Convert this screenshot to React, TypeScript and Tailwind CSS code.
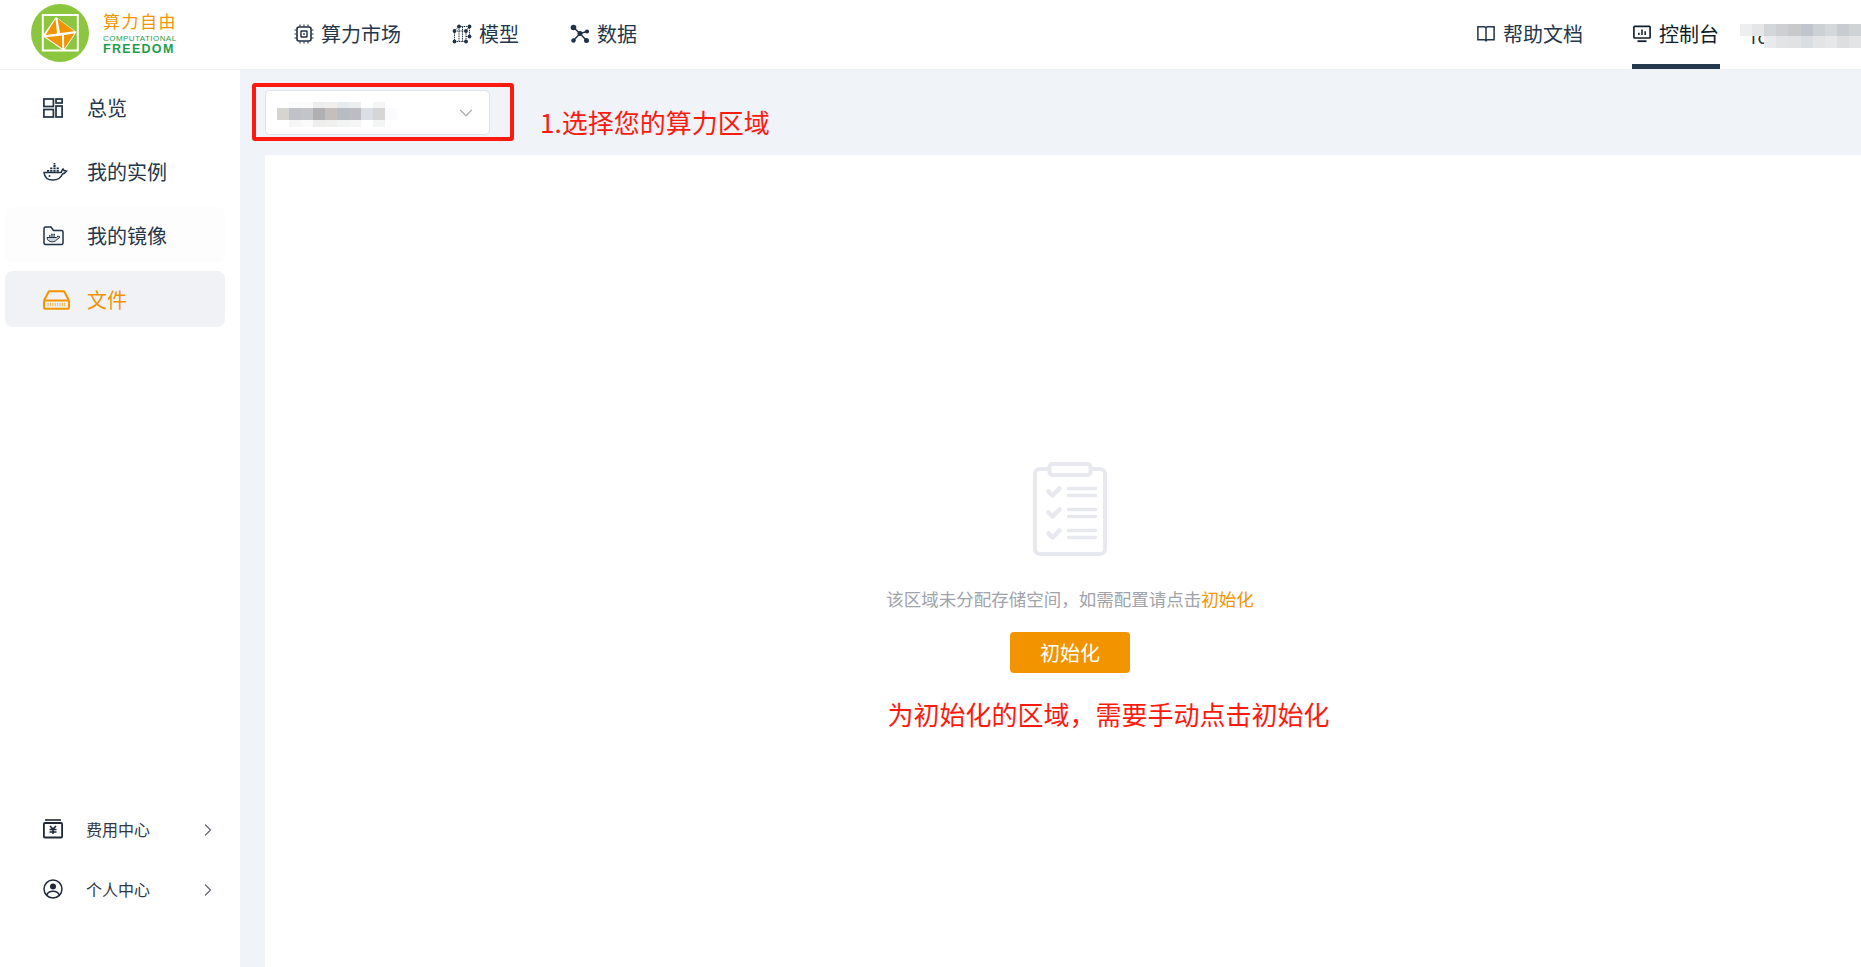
import type { ReactNode } from "react";
import { ChevronDown, ChevronRight } from "lucide-react";

const FONT = "font-['Noto_Sans_CJK_SC','Liberation_Sans',sans-serif]";

function ChipIcon() {
  return (
    <svg viewBox="0 0 20 20" className="-mx-[0.5px] size-5 text-[#1f3144]" fill="none" stroke="currentColor">
      <rect x="3" y="3" width="14" height="14" rx="2" strokeWidth="1.600" />
      <rect x="7" y="7" width="6" height="6" rx="0.6" strokeWidth="1.400" />
      <rect x="9.200" y="9.200" width="1.600" height="1.600" fill="currentColor" stroke="none" />
      <path d="M6 0.5v2M10 0.5v2M14 0.5v2M6 17.5v2M10 17.5v2M14 17.5v2M0.5 6h2M0.5 10h2M0.5 14h2M17.5 6h2M17.5 10h2M17.5 14h2" strokeWidth="1.100" />
    </svg>
  );
}

function ModelIcon() {
  return (
    <svg viewBox="0 0 20 20" className="-mx-[0.5px] size-5 text-[#1f3144]" fill="none" stroke="currentColor">
      <path d="M7 2.5h10.500v10H14M2.500 7h11.500v10.500H2.500zM7 2.500V7M2.500 7L7 2.500M14 7l3.500-4.500M7 7v10.500M10.500 2.500v15" strokeWidth="1" strokeDasharray="1.500 0.800" />
      {[[7, 2.5], [17.5, 2.5], [2.5, 7], [14, 7], [2.5, 17.5], [14, 17.5], [17.5, 12.5]].map(([cx, cy]) => (
        <circle key={`${cx}-${cy}`} cx={cx} cy={cy} r="1.900" fill="currentColor" stroke="none" />
      ))}
    </svg>
  );
}

function DataIcon() {
  return (
    <svg viewBox="0 0 20 20" className="-mx-[0.5px] size-5 text-[#1f3144]" fill="currentColor" stroke="currentColor">
      <path d="M3.500 3.500L10 9.500l7-2M3.500 16.500L10 9.500l6.500 7" strokeWidth="1.500" fill="none" />
      <circle cx="3.500" cy="3.500" r="2.800" stroke="none" />
      <circle cx="17" cy="7.500" r="2.100" stroke="none" />
      <circle cx="10" cy="9.500" r="2.500" stroke="none" />
      <circle cx="3.500" cy="16.500" r="2.200" stroke="none" />
      <circle cx="16.500" cy="16.500" r="2.500" stroke="none" />
    </svg>
  );
}

function BookIcon() {
  return (
    <svg viewBox="0 0 20 20" className="size-[18px] text-[#24364a]" fill="none" stroke="currentColor" strokeWidth="1.700">
      <path d="M1 2h7a2 2 0 0 1 2 2v14a2 2 0 0 0-2-1.500H1zM19 2h-7a2 2 0 0 0-2 2v14a2 2 0 0 1 2-1.500h7z" />
    </svg>
  );
}

function ConsoleIcon() {
  return (
    <svg viewBox="0 0 20 20" className="size-[18px] text-[#0f1c2b]" fill="none" stroke="currentColor">
      <rect x="1" y="1.500" width="18" height="13" rx="1" strokeWidth="1.800" />
      <path d="M6.500 11V8.500M10 11V5M13.500 11V7" strokeWidth="1.700" />
      <path d="M5 18h10" strokeWidth="2" />
    </svg>
  );
}

function GridIcon() {
  return (
    <svg viewBox="0 0 20 20" className="size-5 text-[#1f3144]" fill="none" stroke="currentColor" strokeWidth="1.700">
      <rect x="0.900" y="1" width="9.500" height="7.500" />
      <rect x="0.900" y="11.500" width="9.500" height="7.500" />
      <rect x="13" y="1" width="6.100" height="4" />
      <rect x="13" y="8" width="6.100" height="11" />
    </svg>
  );
}

function WhaleIcon() {
  return (
    <svg viewBox="0 0 25 20" className="h-5 w-[25px] text-[#1f3144]" fill="none" stroke="currentColor" strokeWidth="1.500">
      <path d="M1 10.500h16.500c1 0 1.500-1.500 1.700-2.500l0.800-1 1 1.500 2.500 0.500c-1 1.500-2.500 2.500-4 3-1.500 3.500-5 6-9.500 6-5 0-8.500-2.500-9-7.500z" />
      <circle cx="6.500" cy="14" r="1" fill="currentColor" stroke="none" />
      <path d="M4 8.800h2.200M7.200 8.800h2.200M10.400 8.800h2.200M13.600 8.800h2.200M7.200 6.400h2.200M10.400 6.400h2.200M13.600 6.400h2.200M10.400 4h2.200M11.500 1v1.500" strokeWidth="1.800" />
    </svg>
  );
}

function FolderWhaleIcon() {
  return (
    <svg viewBox="0 0 21 20" className="h-5 w-[21px] text-[#1f3144]" fill="none" stroke="currentColor">
      <path d="M1 2.500a1.500 1.500 0 0 1 1.500-1.500h5.500l2.500 3.500h8a1.500 1.500 0 0 1 1.500 1.500v11a1.500 1.500 0 0 1-1.500 1.500h-16a1.500 1.500 0 0 1-1.500-1.500z" strokeWidth="1.500" />
      <path d="M4 11.500h9.500c0.700 0 1-1 1.200-1.500l2.300 1c-0.500 1-1.500 1.600-2.500 1.800-1 2-3 3-5.200 3-3 0-5.300-1.500-5.300-4.300z" strokeWidth="1" fill="#cbd3dc" />
      <path d="M6 10h1.500M8.200 10h1.500M10.400 10h1.500M8.200 8.300h1.500M10.400 8.300h1.500" strokeWidth="1.300" />
    </svg>
  );
}

function DriveIcon() {
  return (
    <svg viewBox="0 0 27 20" className="h-5 w-[27px] text-[#f29400]" fill="none" stroke="currentColor">
      <path d="M1 10.500L5.500 2a1.500 1.500 0 0 1 1.300-0.800h13.400a1.500 1.500 0 0 1 1.300 0.800L26 10.500" strokeWidth="2" />
      <rect x="1" y="10.500" width="25" height="8.300" rx="1.200" strokeWidth="2" />
      <path d="M5 12.800v3.500M7.400 12.800v3.500M9.800 12.800v3.500M12.200 12.800v3.500M14.600 12.800v3.500M17 12.800v3.500M19.400 12.800v3.500M21.800 12.800v3.500" strokeWidth="1" opacity="0.700" />
    </svg>
  );
}

function FeeIcon() {
  return (
    <svg viewBox="0 0 20 20" className="size-5 text-[#1f2937]" fill="none" stroke="currentColor">
      <path d="M2 1h16" strokeWidth="1.600" />
      <rect x="0.900" y="4" width="18.200" height="14.500" rx="1" strokeWidth="1.800" />
      <path d="M7 7l3 3 3-3M6.500 10.500h7M6.500 13h7M10 10v5" strokeWidth="1.600" />
    </svg>
  );
}

function UserIcon() {
  return (
    <svg viewBox="0 0 20 20" className="size-5 text-[#1f2937]" fill="none" stroke="currentColor" strokeWidth="1.500">
      <circle cx="10" cy="10" r="9" />
      <circle cx="10" cy="7.500" r="3" fill="currentColor" stroke="none" />
      <path d="M3.800 16c1-2.500 3.500-3.700 6.200-3.700s5.200 1.200 6.200 3.700" />
    </svg>
  );
}

function ClipboardIcon() {
  return (
    <svg viewBox="0 0 74 94" className="h-[94px] w-[74px] text-[#e8e9ee]" fill="none" stroke="currentColor" strokeLinecap="round" strokeLinejoin="round">
      <path d="M16 7H7a5 5 0 0 0-5 5v75a5 5 0 0 0 5 5h60a5 5 0 0 0 5-5V12a5 5 0 0 0-5-5h-9" strokeWidth="4" />
      <rect x="16.500" y="2" width="41" height="11" rx="3" strokeWidth="4" />
      <path d="M15.500 29.500l4 4 7-7M15.500 50.500l4 4 7-7M15.500 71.500l4 4 7-7" strokeWidth="4.500" />
      <path d="M35.500 26.500h27M35.500 33.500h27M35.500 47.500h27M35.500 54.500h27M35.500 68.500h27M35.500 75.500h27" strokeWidth="3.400" />
    </svg>
  );
}

function Logo() {
  return (
    <div className="flex items-center">
      <svg viewBox="0 0 58 58" className="size-[58px]">
        <circle cx="29" cy="29" r="29" fill="#8cc63f" />
        <rect x="11.800" y="11" width="35" height="35.500" fill="none" stroke="#fff" strokeWidth="2" />
        <path d="M25 13L45.500 28 33 47 11.500 32z" fill="#fff" />
        <path d="M24.500 15L14.500 31 26 29.500z" fill="#f29400" />
        <path d="M26.500 14.500L43.500 27.300 29 29z" fill="#f29400" />
        <path d="M15 33.300L31.300 44.500 31 31.500z" fill="#f29400" />
        <path d="M33.200 45L43.500 29.500 33 31z" fill="#f29400" />
      </svg>
      <div className="ml-[14px] flex w-[73px] flex-col">
        <span className="text-[17px] leading-[20px] tracking-[1.500px] whitespace-nowrap text-[#f29400]">算力自由</span>
        <span className="mt-[4px] font-['Liberation_Sans',sans-serif] text-[8px] leading-[8px] font-medium tracking-[0.450px] whitespace-nowrap text-[#1f9d4d]">COMPUTATIONAL</span>
        <span className="font-['Liberation_Sans',sans-serif] text-[12.500px] leading-[12px] font-bold tracking-[1.300px] whitespace-nowrap text-[#1f9d4d]">FREEDOM</span>
      </div>
    </div>
  );
}

function NavItem({ icon, label, active }: { icon: ReactNode; label: string; active?: boolean }) {
  return (
    <div className={`flex h-full items-center gap-2 px-px text-[20px] ${active ? "border-b-[5px] border-[#23374d] pt-[3px] text-[#0f1c2b]" : "pb-[2px] text-[#24364a]"}`}>
      {icon}
      <span>{label}</span>
    </div>
  );
}

function SideItem({ icon, label, className }: { icon: ReactNode; label: string; className?: string }) {
  return (
    <div className={`flex h-[56px] w-[220px] items-center rounded-lg pt-[2px] pl-[38px] text-[20px] ${className ?? "text-[#24364a]"}`}>
      <span className="flex w-[44px] justify-start">{icon}</span>
      {label}
    </div>
  );
}

function SideLink({ icon, label }: { icon: ReactNode; label: string }) {
  return (
    <div className="flex h-[60px] items-center pr-[22px] pl-[43px] text-[16px] text-[#303844]">
      <span className="w-[43px]">{icon}</span>
      <span className="flex-1">{label}</span>
      <ChevronRight className="mt-px size-5 text-[#666c75]" strokeWidth={1.500} />
    </div>
  );
}

const SELECT_MOSAIC = [
  { h: 6, cells: ["#ffffff", "#fbfbfb", "#fbfbfb", "#eeeeee", "#f2f0ee", "#e8ebee", "#edeeef", "#ffffff", "#f5f5f5", "#ffffff"] },
  { h: 12, cells: ["#d5d4d0", "#c0c2c8", "#c4c5c8", "#b0b0b2", "#c4bfbc", "#b6bcc1", "#bdbcc2", "#dbdee3", "#d6d6d6", "#fbfbfd"] },
  { h: 7, cells: ["#ffffff", "#f6f6f6", "#f9faf9", "#eeeeee", "#f0f0ef", "#f2f3f3", "#f6f6f6", "#ffffff", "#f3f4f4", "#ffffff"] },
];

const USER_MOSAIC = [
  { h: 12, cells: ["#eceef0", "#e4e6e8", "#d2d7db", "#ccd0d3", "#c8c9ca", "#c0c4cc", "#ccd1d5", "#d4d8db", "#c8ccd0", "#d0d3d6"] },
  { h: 12, cells: ["transparent", "transparent", "#e8eaec", "#e2e4e6", "#e0e2e4", "#dadde2", "#e2e4e6", "#e6e8ea", "#dcdee0", "#e2e4e6"] },
];

function Mosaic({ rows, cell }: { rows: { h: number; cells: string[] }[]; cell: number }) {
  return (
    <div className="flex flex-col">
      {rows.map((row, i) => (
        <div key={i} className="flex">
          {row.cells.map((color, j) => (
            <div key={j} style={{ background: color, width: cell, height: row.h }} />
          ))}
        </div>
      ))}
    </div>
  );
}

export default function App() {
  return (
    <div className={`flex h-screen w-full flex-col overflow-hidden bg-white ${FONT}`}>
      <header className="flex h-[70px] shrink-0 items-center border-b border-[#eef0f3] pl-[31px]">
        <div className="mb-[3px]"><Logo /></div>
        <nav className="ml-[117px] flex h-full items-center gap-[49px]">
          <NavItem icon={<ChipIcon />} label="算力市场" />
          <NavItem icon={<ModelIcon />} label="模型" />
          <NavItem icon={<DataIcon />} label="数据" />
        </nav>
        <div className="ml-auto flex h-full items-center">
          <NavItem icon={<BookIcon />} label="帮助文档" />
          <div className="ml-[48px] h-full"><NavItem icon={<ConsoleIcon />} label="控制台" active /></div>
          <div className="relative mt-[3px] ml-[20px]">
            {/* bit of the name that shows under the blur */}
            <span className="absolute top-[3px] left-[8px] text-[18px] leading-[18px] text-[#24364a]">To</span>
            <div className="relative"><Mosaic rows={USER_MOSAIC} cell={12.100} /></div>
          </div>
        </div>
      </header>

      <div className="flex min-h-0 flex-1">
        <aside className="flex w-[240px] shrink-0 flex-col justify-between pt-[9px] pb-[48px]">
          <div className="flex flex-col gap-2 pl-[5px]">
            <SideItem icon={<GridIcon />} label="总览" />
            <SideItem icon={<WhaleIcon />} label="我的实例" />
            <SideItem icon={<FolderWhaleIcon />} label="我的镜像" className="bg-[#fdfdfd] text-[#24364a]" />
            <SideItem icon={<DriveIcon />} label="文件" className="bg-[#f0f2f6] text-[#f29400]" />
          </div>
          <div className="flex flex-col">
            <SideLink icon={<FeeIcon />} label="费用中心" />
            <SideLink icon={<UserIcon />} label="个人中心" />
          </div>
        </aside>

        <main className="flex min-w-0 flex-1 flex-col bg-[#f0f3f8] pt-[20px] pl-[25px]">
          <div className="relative flex h-[45px] shrink-0 items-center">
            <div className="flex h-[45px] w-[225px] items-center justify-between rounded-[5px] border border-[#e0e3ea] bg-white pr-[12px] pl-[11px]">
              <div className="mt-[4px]"><Mosaic rows={SELECT_MOSAIC} cell={12} /></div>
              <ChevronDown className="size-[22px] text-[#a8abb2]" strokeWidth={1.300} />
            </div>
            {/* annotation drawn on top of the screenshot */}
            <div className="absolute top-[-7px] left-[-13px] h-[58px] w-[262px] rounded-[3px] border-4 border-[#ff1a0f]" />
            <span className="mt-[18px] ml-[50px] text-[26px] text-[#ff1a0f]">1.选择您的算力区域</span>
          </div>

          <section className="mt-[20px] flex flex-1 flex-col items-center bg-white pt-[307px] pl-[14px]">
            <ClipboardIcon />
            <p className="mt-[30px] text-[17.500px] leading-[26px] whitespace-nowrap text-[#a0a3ab]">
              该区域未分配存储空间，如需配置请点击<span className="text-[#f29400]">初始化</span>
            </p>
            <button className="mt-[20px] h-[41px] w-[120px] rounded bg-[#f29400] text-[20px] text-white">初始化</button>
            <p className="mt-[22px] ml-[77px] text-[26px] leading-[38px] whitespace-nowrap text-[#ff1a0f]">为初始化的区域，需要手动点击初始化</p>
          </section>
        </main>
      </div>
    </div>
  );
}
